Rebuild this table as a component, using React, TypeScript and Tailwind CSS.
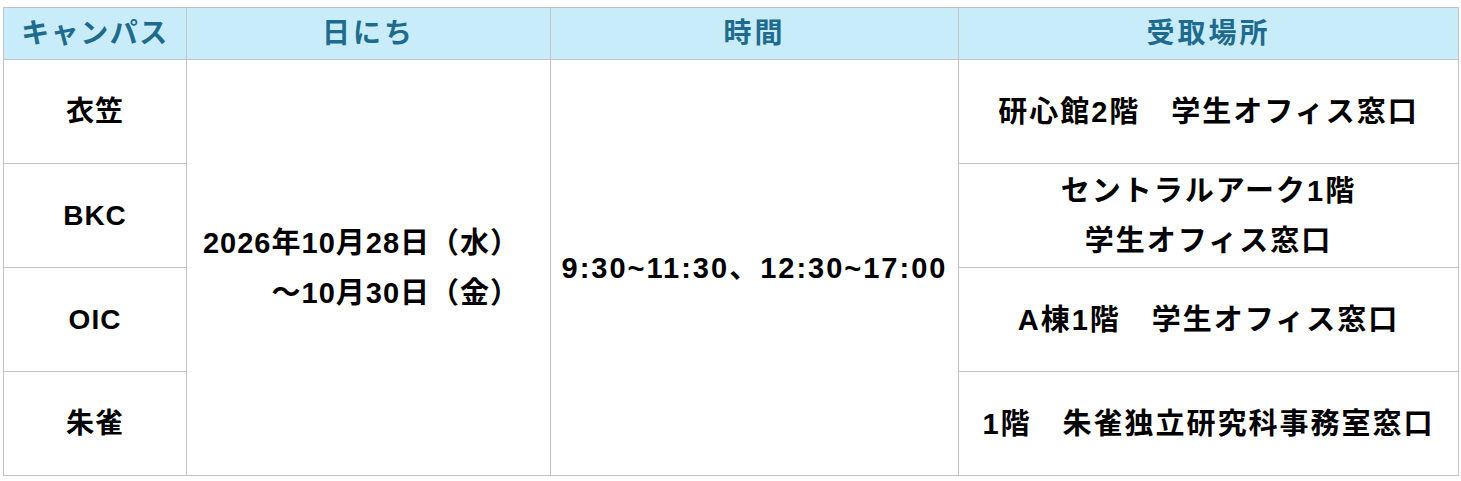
const places = [
  { campus: '衣笠', place: ['研心館2階　学生オフィス窓口'] },
  { campus: 'BKC', place: ['セントラルアーク1階', '学生オフィス窓口'] },
  { campus: 'OIC', place: ['A棟1階　学生オフィス窓口'] },
  { campus: '朱雀', place: ['1階　朱雀独立研究科事務室窓口'] },
];

export default function App() {
  const font = { fontFamily: '"Liberation Sans", "Noto Sans CJK JP", sans-serif' };
  const th = 'border border-[#c3c3c3] bg-[#c9ecfa] text-[#1e6b8e] h-[52px] text-[28px] font-bold text-center align-middle';
  const cell = 'border border-[#c3c3c3] h-[104px] font-bold text-center align-middle text-black leading-[50px]';
  const td = cell + ' text-[29px] tracking-[2px]';
  const tdCampus = cell + ' text-[28px] tracking-[1px]';

  return (
    <div className="bg-white w-[1461px] h-[481px] pt-[7px] pl-[3px]" style={font}>
      <table className="border-collapse table-fixed w-[1455px]">
        <colgroup>
          <col className="w-[183px]" />
          <col className="w-[364px]" />
          <col className="w-[408px]" />
          <col className="w-[500px]" />
        </colgroup>
        <thead>
          <tr>
            <th className={th + ' tracking-[1.5px]'}>キャンパス</th>
            <th className={th + ' tracking-[3px]'}>日にち</th>
            <th className={th + ' tracking-[3px]'}>時間</th>
            <th className={th + ' tracking-[3px]'}>受取場所</th>
          </tr>
        </thead>
        <tbody>
          {places.map((p, i) => (
            <tr key={p.campus}>
              <td className={tdCampus}>{p.campus}</td>
              {i === 0 && (
                <>
                  <td rowSpan={4} className={cell + ' text-[29px] tracking-[1px]'}>
                    <div className="inline-block text-right pr-[14px]">
                      <div>2026年10月28日（水）</div>
                      <div>～10月30日（金）</div>
                    </div>
                  </td>
                  <td rowSpan={4} className={td}>9:30~11:30、12:30~17:00</td>
                </>
              )}
              <td className={td}>
                {p.place.map((l) => (
                  <div key={l}>{l}</div>
                ))}
              </td>
            </tr>
          ))}
        </tbody>
      </table>
    </div>
  );
}
